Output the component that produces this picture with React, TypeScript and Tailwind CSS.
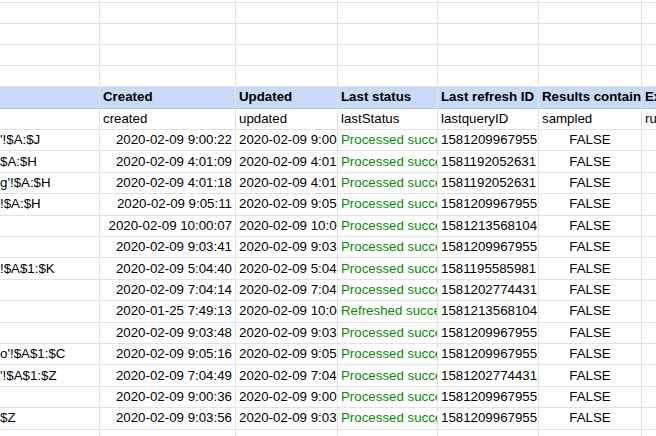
const cols = [100, 136, 102, 100, 101, 103, 40];

type Row = [string, string, string, string, string, string, string];

const data: Row[] = [
  ["'!$A:$J", '2020-02-09 9:00:22', '2020-02-09 9:00:22', 'Processed successfully', '1581209967955', 'FALSE', ''],
  ['$A:$H', '2020-02-09 4:01:09', '2020-02-09 4:01:09', 'Processed successfully', '1581192052631', 'FALSE', ''],
  ["g'!$A:$H", '2020-02-09 4:01:18', '2020-02-09 4:01:18', 'Processed successfully', '1581192052631', 'FALSE', ''],
  ['!$A:$H', '2020-02-09 9:05:11', '2020-02-09 9:05:11', 'Processed successfully', '1581209967955', 'FALSE', ''],
  ['', '2020-02-09 10:00:07', '2020-02-09 10:00:07', 'Processed successfully', '1581213568104', 'FALSE', ''],
  ['', '2020-02-09 9:03:41', '2020-02-09 9:03:41', 'Processed successfully', '1581209967955', 'FALSE', ''],
  ['!$A$1:$K', '2020-02-09 5:04:40', '2020-02-09 5:04:40', 'Processed successfully', '1581195585981', 'FALSE', ''],
  ['', '2020-02-09 7:04:14', '2020-02-09 7:04:14', 'Processed successfully', '1581202774431', 'FALSE', ''],
  ['', '2020-01-25 7:49:13', '2020-02-09 10:00:07', 'Refreshed successfully', '1581213568104', 'FALSE', ''],
  ['', '2020-02-09 9:03:48', '2020-02-09 9:03:48', 'Processed successfully', '1581209967955', 'FALSE', ''],
  ["o'!$A$1:$C", '2020-02-09 9:05:16', '2020-02-09 9:05:16', 'Processed successfully', '1581209967955', 'FALSE', ''],
  ["'!$A$1:$Z", '2020-02-09 7:04:49', '2020-02-09 7:04:49', 'Processed successfully', '1581202774431', 'FALSE', ''],
  ['', '2020-02-09 9:00:36', '2020-02-09 9:00:36', 'Processed successfully', '1581209967955', 'FALSE', ''],
  ['$Z', '2020-02-09 9:03:56', '2020-02-09 9:03:56', 'Processed successfully', '1581209967955', 'FALSE', ''],
  ['', '', '', '', '', '', ''],
];

const header = ['', 'Created', 'Updated', 'Last status', 'Last refresh ID', 'Results contain', 'Ex'];
const keys = ['', 'created', 'updated', 'lastStatus', 'lastqueryID', 'sampled', 'ru'];

function Cell({ w, children, className = '' }: { w: number; children?: React.ReactNode; className?: string }) {
  return (
    <div
      style={{ width: w }}
      className={`shrink-0 h-full border-r border-[#e2e3e3] px-[3px] overflow-hidden whitespace-nowrap flex items-center ${className}`}
    >
      {children}
    </div>
  );
}

export default function App() {
  return (
    <div
      className="w-[656px] h-[436px] overflow-hidden bg-white text-[13.3px] text-black"
      style={{ fontFamily: '"Liberation Sans", Arial, sans-serif' }}
    >
      <div className="-mt-[18px]">
        {[0, 1, 2, 3, 4].map((i) => (
          <div key={i} className="flex h-[21px] border-b border-[#e2e3e3]">
            {cols.map((w, j) => (
              <Cell key={j} w={w} />
            ))}
          </div>
        ))}
        <div className="flex h-[21.7px] border-b border-[#b7c6e6] bg-[#c9daf8] font-bold">
          {header.map((h, j) => (
            <Cell key={j} w={cols[j]} className="border-[#b7c6e6]">
              {h}
            </Cell>
          ))}
        </div>
        <div className="flex h-[21.4px] border-b border-[#e2e3e3]">
          {keys.map((k, j) => (
            <Cell key={j} w={cols[j]}>
              {k}
            </Cell>
          ))}
        </div>
        {data.map((r, i) => (
          <div key={i} className="flex h-[21.4px] border-b border-[#e2e3e3]">
            <Cell w={cols[0]} className="!px-0">{r[0]}</Cell>
            <Cell w={cols[1]} className="justify-end">{r[1]}</Cell>
            <Cell w={cols[2]}>{r[2]}</Cell>
            <Cell w={cols[3]} className="text-[#0a8a0a]">{r[3]}</Cell>
            <Cell w={cols[4]}>{r[4]}</Cell>
            <Cell w={cols[5]} className="justify-center">{r[5]}</Cell>
            <Cell w={cols[6]}>{r[6]}</Cell>
          </div>
        ))}
      </div>
    </div>
  );
}
